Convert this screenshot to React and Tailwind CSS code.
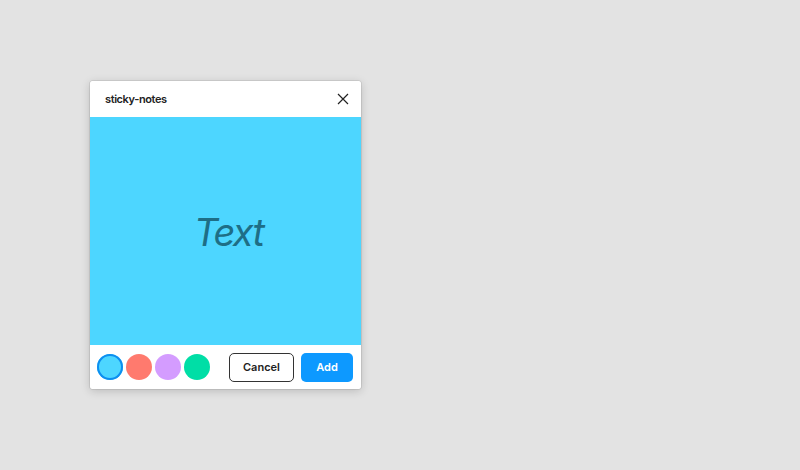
import React from "react";

const colors = [
  { name: "blue", cls: "bg-[#4dd6ff] ring-2 ring-[#0d8ef0] ring-inset" },
  { name: "red", cls: "bg-[#ff7a6e]" },
  { name: "purple", cls: "bg-[#d49cff]" },
  { name: "green", cls: "bg-[#00dea6]" },
];

export default function App() {
  return (
    <div className="w-[800px] h-[470px] bg-[#e3e3e3] font-['Inter',sans-serif] pt-[81px] pl-[90px]">
      <div className="w-[271px] h-[308px] bg-white rounded-[2px] shadow-[0_2px_10px_rgba(0,0,0,0.18),0_0_0_0.5px_rgba(0,0,0,0.15)] flex flex-col overflow-hidden">
        {/* Header */}
        <div className="h-[36px] flex items-center justify-between pl-[15px] pr-[12px]">
          <span className="text-[11px] font-semibold text-[#222] tracking-[-0.4px]">sticky-notes</span>
          <svg width="12" height="12" viewBox="0 0 12 12" fill="none" stroke="#222" strokeWidth="1.2">
            <path d="M1 1L11 11M11 1L1 11" />
          </svg>
        </div>

        {/* Note */}
        <div className="h-[228px] bg-[#4dd6ff] flex items-center justify-center pl-[6px]">
          <span className="text-[38px] italic text-[#1e6e86] tracking-[-1.8px] pt-[2px]">Text</span>
        </div>

        {/* Footer */}
        <div className="flex-1 flex items-center justify-between pl-[7px] pr-[8px]">
          <div className="flex gap-[3px]">
            {colors.map((c) => (
              <div key={c.name} className={`w-[26px] h-[26px] rounded-full ${c.cls}`} />
            ))}
          </div>
          <div className="flex gap-[7px]">
            <button className="w-[65px] h-[29px] rounded-[5px] border border-[#333] bg-white text-[11px] font-semibold text-[#222]">
              Cancel
            </button>
            <button className="w-[52px] h-[29px] rounded-[5px] bg-[#0d99ff] text-[11px] font-semibold text-white">
              Add
            </button>
          </div>
        </div>
      </div>
    </div>
  );
}
